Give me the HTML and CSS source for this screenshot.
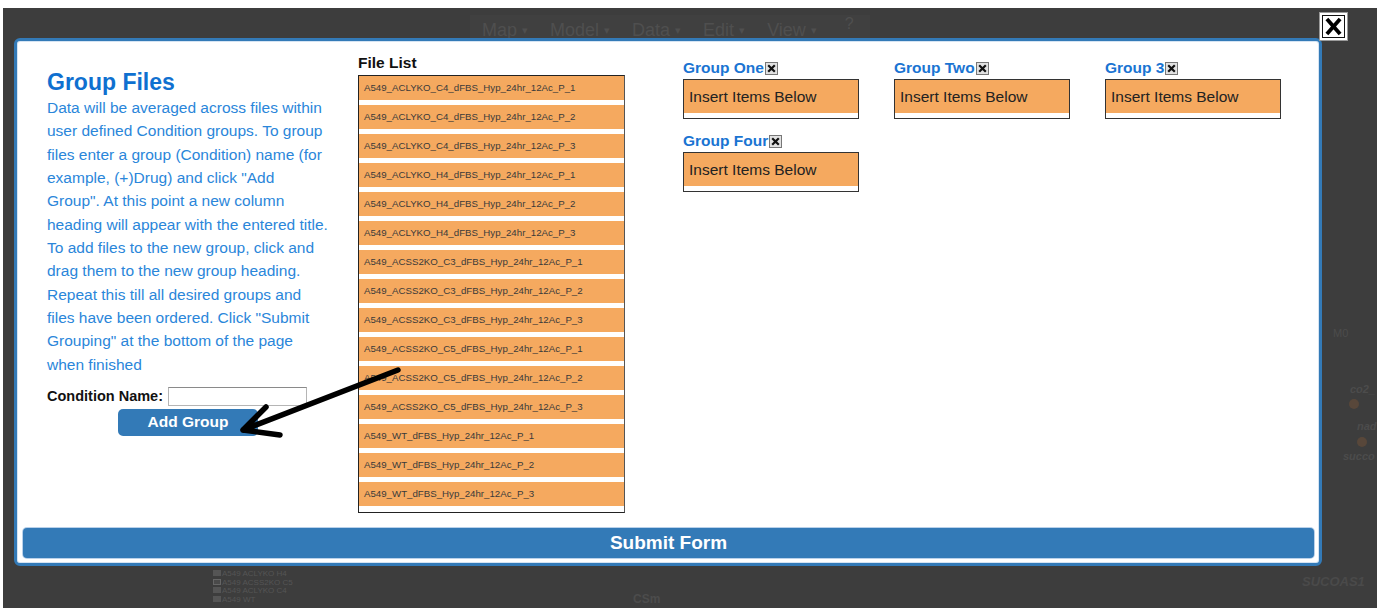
FILE: index.html
```html
<!DOCTYPE html>
<html lang="en">
<head>
<meta charset="utf-8">
<title>Group Files</title>
<link rel="stylesheet" href="styles.css">
</head>
<body>
<div class="screen">
  <nav class="menubar">
    <span class="menu-item">Map <i class="caret">▾</i></span>
    <span class="menu-item">Model <i class="caret">▾</i></span>
    <span class="menu-item">Data <i class="caret">▾</i></span>
    <span class="menu-item">Edit <i class="caret">▾</i></span>
    <span class="menu-item">View <i class="caret">▾</i></span>
    <span class="menu-help">?</span>
  </nav>

  <div class="canvas">
    <span class="node-label m0">M0</span>
    <span class="node-label co2">co2_</span>
    <span class="node-label nad">nad</span>
    <span class="node-label succ">succo</span>
    <span class="node-dot d1"></span>
    <span class="node-dot d2"></span>
    <span class="node-label sucoas">SUCOAS1</span>
    <span class="node-label csm">CSm</span>
    <ul class="legend">
      <li><i class="sw"></i>A549 ACLYKO H4</li>
      <li><i class="sw light"></i>A549 ACSS2KO C5</li>
      <li><i class="sw"></i>A549 ACLYKO C4</li>
      <li><i class="sw"></i>A549 WT</li>
    </ul>
  </div>

  <div class="modal">
    <div class="modal-body">
      <section class="intro">
        <h1 class="intro-title">Group Files</h1>
        <p class="intro-text">Data will be averaged across files within user defined Condition groups. To group files enter a group (Condition) name (for example, (+)Drug) and click "Add Group". At this point a new column heading will appear with the entered title. To add files to the new group, click and drag them to the new group heading. Repeat this till all desired groups and files have been ordered. Click "Submit Grouping" at the bottom of the page when finished</p>
        <div class="cond-row">
          <label class="cond-label" for="cond">Condition Name:</label>
          <input class="cond-input" id="cond" type="text">
        </div>
        <button class="add-btn" type="button">Add Group</button>
      </section>

      <section class="files">
        <h2 class="files-title">File List</h2>
        <ul class="file-list">
          <li class="file-item">A549_ACLYKO_C4_dFBS_Hyp_24hr_12Ac_P_1</li>
          <li class="file-item">A549_ACLYKO_C4_dFBS_Hyp_24hr_12Ac_P_2</li>
          <li class="file-item">A549_ACLYKO_C4_dFBS_Hyp_24hr_12Ac_P_3</li>
          <li class="file-item">A549_ACLYKO_H4_dFBS_Hyp_24hr_12Ac_P_1</li>
          <li class="file-item">A549_ACLYKO_H4_dFBS_Hyp_24hr_12Ac_P_2</li>
          <li class="file-item">A549_ACLYKO_H4_dFBS_Hyp_24hr_12Ac_P_3</li>
          <li class="file-item">A549_ACSS2KO_C3_dFBS_Hyp_24hr_12Ac_P_1</li>
          <li class="file-item">A549_ACSS2KO_C3_dFBS_Hyp_24hr_12Ac_P_2</li>
          <li class="file-item">A549_ACSS2KO_C3_dFBS_Hyp_24hr_12Ac_P_3</li>
          <li class="file-item">A549_ACSS2KO_C5_dFBS_Hyp_24hr_12Ac_P_1</li>
          <li class="file-item">A549_ACSS2KO_C5_dFBS_Hyp_24hr_12Ac_P_2</li>
          <li class="file-item">A549_ACSS2KO_C5_dFBS_Hyp_24hr_12Ac_P_3</li>
          <li class="file-item">A549_WT_dFBS_Hyp_24hr_12Ac_P_1</li>
          <li class="file-item">A549_WT_dFBS_Hyp_24hr_12Ac_P_2</li>
          <li class="file-item">A549_WT_dFBS_Hyp_24hr_12Ac_P_3</li>
        </ul>
      </section>

      <section class="groups">
        <div class="group">
          <div class="group-head">Group One<span class="group-x"><svg viewBox="0 0 10 10"><path d="M2 2 L8 8 M8 2 L2 8"/></svg></span></div>
          <div class="group-box"><div class="group-slot">Insert Items Below</div></div>
        </div>
        <div class="group">
          <div class="group-head">Group Two<span class="group-x"><svg viewBox="0 0 10 10"><path d="M2 2 L8 8 M8 2 L2 8"/></svg></span></div>
          <div class="group-box"><div class="group-slot">Insert Items Below</div></div>
        </div>
        <div class="group">
          <div class="group-head">Group 3<span class="group-x"><svg viewBox="0 0 10 10"><path d="M2 2 L8 8 M8 2 L2 8"/></svg></span></div>
          <div class="group-box"><div class="group-slot">Insert Items Below</div></div>
        </div>
        <div class="group">
          <div class="group-head">Group Four<span class="group-x"><svg viewBox="0 0 10 10"><path d="M2 2 L8 8 M8 2 L2 8"/></svg></span></div>
          <div class="group-box"><div class="group-slot">Insert Items Below</div></div>
        </div>
      </section>
    </div>
    <button class="submit-btn" type="button">Submit Form</button>
  </div>

  <button class="close-x" type="button" aria-label="Close">
    <svg viewBox="0 0 18 20"><path d="M2 2 L16 18 M16 2 L2 18"/></svg>
  </button>

  <svg class="arrow" viewBox="0 0 1397 608" width="1397" height="608">
    <path d="M398 370 L243 430 M243 430 L266 407 M243 430 L280 435"/>
  </svg>
</div>
</body>
</html>
```

FILE: styles.css
```css
* { box-sizing: border-box; }

html, body {
  margin: 0;
  background: #ffffff;
}

body {
  padding: 8px 20px 0 3px;
  height: 608px;
  overflow: hidden;
  font-family: "Liberation Sans", Arial, sans-serif;
}

.screen {
  position: relative;
  height: 600px;
  background: #3d3d3d;
  overflow: hidden;
}

/* faint page behind the modal */
.menubar {
  display: flex;
  align-items: center;
  margin: 7px 0 0 467px;
  width: 400px;
  height: 27px;
  background: #404040;
  color: #4f4f4f;
  font-size: 18px;
  padding: 4px 0 0 12px;
}
.menu-item { margin-right: 22px; white-space: nowrap; }
.caret { font-style: normal; font-size: 11px; vertical-align: 2px; }
.menu-help { margin-left: 6px; font-size: 16px; margin-top: -14px; }

.canvas { position: absolute; inset: 0; pointer-events: none; }
.node-label {
  position: absolute;
  color: #4c4c4c;
  font-size: 11px;
  font-style: italic;
  font-weight: bold;
}
.m0 { left: 1330px; top: 319px; font-style: normal; font-weight: normal; }
.co2 { left: 1347px; top: 375px; }
.nad { left: 1354px; top: 412px; }
.succ { left: 1340px; top: 442px; }
.sucoas { left: 1299px; top: 566px; font-size: 13px; color: #4a4a4a; }
.csm { left: 630px; top: 584px; font-size: 12px; font-style: normal; }
.node-dot {
  position: absolute;
  width: 10px;
  height: 10px;
  border-radius: 50%;
  background: #58473a;
}
.d1 { left: 1346px; top: 391px; }
.d2 { left: 1354px; top: 429px; }

.legend {
  position: absolute;
  left: 210px;
  top: 562px;
  margin: 0;
  padding: 0;
  list-style: none;
  color: #555;
  font-size: 8px;
  line-height: 8.6px;
}
.sw {
  display: inline-block;
  width: 8px;
  height: 6px;
  background: #555;
  margin-right: 1px;
}
.sw.light { background: #4a4a4a; border: 1px solid #666; }

/* modal */
.modal {
  position: absolute;
  left: 11px;
  top: 30px;
  width: 1308px;
  height: 528px;
  background: #ffffff;
  border: 3px solid #337ab7;
  border-radius: 6px;
  box-shadow: inset 0 0 0 1px #d5e4f3;
  display: flex;
  flex-direction: column;
}

.modal-body {
  flex: 1;
  display: flex;
  align-items: flex-start;
  padding-left: 30px;
}

.intro {
  width: 290px;
  padding-top: 27px;
}
.intro-title {
  margin: 0;
  font-size: 23px;
  line-height: 28px;
  font-weight: bold;
  color: #0f70d0;
}
.intro-text {
  margin: 0;
  width: 283px;
  font-size: 15.5px;
  line-height: 23.33px;
  color: #2a86da;
}
.cond-row {
  display: flex;
  align-items: center;
  margin-top: 11px;
}
.cond-label {
  font-size: 14.5px;
  font-weight: bold;
  color: #111;
}
.cond-input {
  margin-left: 5px;
  width: 139px;
  height: 19px;
  border: 1px solid #b5b5b5;
  border-top-color: #8a8a8a;
  padding: 0;
  background: #fff;
}
.add-btn {
  display: block;
  margin: 3px 0 0 71px;
  width: 140px;
  height: 27px;
  border: none;
  border-radius: 5px;
  background: #337ab7;
  color: #ffffff;
  font-family: inherit;
  font-size: 15.5px;
  font-weight: bold;
  padding: 0;
}

.files {
  margin-left: 21px;
  padding-top: 13px;
  width: 267px;
}
.files-title {
  margin: 0 0 3px;
  font-size: 15.5px;
  line-height: 18px;
  font-weight: bold;
  color: #111;
}
.file-list {
  margin: 0;
  padding: 0 0 1px;
  list-style: none;
  border: 1px solid #222;
  border-right-color: #555;
}
.file-item {
  height: 24px;
  line-height: 24px;
  margin-bottom: 5px;
  padding-left: 5px;
  background: #f5a95f;
  color: #3a3a3a;
  font-size: 9.7px;
  white-space: nowrap;
}

.groups {
  margin-left: 58px;
  padding-top: 18px;
  display: grid;
  grid-template-columns: repeat(3, 176px);
  column-gap: 35px;
  row-gap: 13px;
}
.group-head {
  font-size: 15.5px;
  line-height: 18px;
  font-weight: bold;
  color: #1a74d2;
  white-space: nowrap;
  margin-bottom: 2px;
}
.group-x {
  display: inline-block;
  width: 13px;
  height: 13px;
  border: 1px solid #777;
  background: #e2e2e2;
  vertical-align: -2px;
  margin-left: 1px;
}
.group-x svg {
  display: block;
  width: 11px;
  height: 11px;
}
.group-x path {
  stroke: #111;
  stroke-width: 2;
  fill: none;
}
.group-box {
  width: 176px;
  border: 1px solid #333;
  background: #ffffff;
  padding-bottom: 5px;
}
.group-slot {
  height: 33px;
  line-height: 33px;
  background: #f5a95f;
  padding-left: 5px;
  color: #222;
  font-size: 15.5px;
  white-space: nowrap;
}

.submit-btn {
  margin: 0 5px 5px 6px;
  height: 30px;
  border: none;
  border-radius: 4px;
  background: #337ab7;
  box-shadow: 0 0 0 1px #b9d1ea;
  color: #ffffff;
  font-family: inherit;
  font-size: 19px;
  font-weight: bold;
  padding: 0;
}

.close-x {
  position: absolute;
  left: 1316px;
  top: 4px;
  width: 29px;
  height: 29px;
  padding: 0;
  background: #ffffff;
  border: 1px solid #9a9a9a;
  box-shadow: inset 0 0 0 2px #ffffff, inset 0 0 0 3px #111;
  display: flex;
  align-items: center;
  justify-content: center;
}
.close-x svg {
  width: 17px;
  height: 19px;
}
.close-x path {
  stroke: #000;
  stroke-width: 4;
  fill: none;
}

.arrow {
  position: absolute;
  left: -3px;
  top: -8px;
  pointer-events: none;
}
.arrow path {
  stroke: #000;
  stroke-width: 5.5;
  stroke-linecap: round;
  fill: none;
}
```
